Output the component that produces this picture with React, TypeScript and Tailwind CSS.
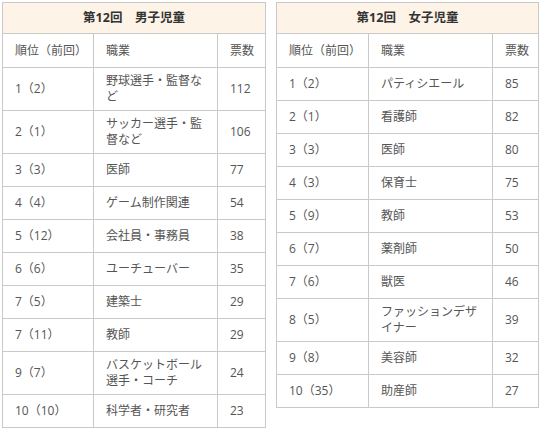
import React from 'react';

type Row = { rank: string; job: string; votes: string };

const boys: Row[] = [
  { rank: '1（2）', job: '野球選手・監督など', votes: '112' },
  { rank: '2（1）', job: 'サッカー選手・監督など', votes: '106' },
  { rank: '3（3）', job: '医師', votes: '77' },
  { rank: '4（4）', job: 'ゲーム制作関連', votes: '54' },
  { rank: '5（12）', job: '会社員・事務員', votes: '38' },
  { rank: '6（6）', job: 'ユーチューバー', votes: '35' },
  { rank: '7（5）', job: '建築士', votes: '29' },
  { rank: '7（11）', job: '教師', votes: '29' },
  { rank: '9（7）', job: 'バスケットボール選手・コーチ', votes: '24' },
  { rank: '10（10）', job: '科学者・研究者', votes: '23' },
];

const girls: Row[] = [
  { rank: '1（2）', job: 'パティシエール', votes: '85' },
  { rank: '2（1）', job: '看護師', votes: '82' },
  { rank: '3（3）', job: '医師', votes: '80' },
  { rank: '4（3）', job: '保育士', votes: '75' },
  { rank: '5（9）', job: '教師', votes: '53' },
  { rank: '6（7）', job: '薬剤師', votes: '50' },
  { rank: '7（6）', job: '獣医', votes: '46' },
  { rank: '8（5）', job: 'ファッションデザイナー', votes: '39' },
  { rank: '9（8）', job: '美容師', votes: '32' },
  { rank: '10（35）', job: '助産師', votes: '27' },
];

const cell = 'bg-white flex items-center min-h-[32px] px-[12px] py-[5px] leading-[16px]';

function RankTable({ title, rows, cols }: { title: string; rows: Row[]; cols: string }) {
  return (
    <div className={`grid ${cols} gap-px bg-[#c9c9c9] p-px`}>
      <div className="col-span-3 bg-[#fdf4e7] h-[30px] flex items-center justify-center font-bold text-[12.5px] text-[#333]">
        {title}
      </div>
      <div className={`${cell} h-[33px] whitespace-nowrap`}>順位（前回）</div>
      <div className={`${cell} h-[33px]`}>職業</div>
      <div className={`${cell} h-[33px] whitespace-nowrap`}>票数</div>
      {rows.map((r, i) => (
        <React.Fragment key={i}>
          <div className={`${cell} whitespace-nowrap`}>{r.rank}</div>
          <div className={cell}>{r.job}</div>
          <div className={`${cell} whitespace-nowrap`}>{r.votes}</div>
        </React.Fragment>
      ))}
    </div>
  );
}

export default function App() {
  return (
    <div
      className="w-[540px] h-[429px] bg-white pl-[2px] pt-[2px] flex items-start gap-[10px] text-[12px] text-[#555]"
      style={{ fontFamily: '"Open Sans", "Noto Sans CJK JP", sans-serif' }}
    >
      <div className="w-[264px]">
        <RankTable title="第12回　男子児童" rows={boys} cols="grid-cols-[90px_123px_47px]" />
      </div>
      <div className="w-[263px]">
        <RankTable title="第12回　女子児童" rows={girls} cols="grid-cols-[91px_123px_45px]" />
      </div>
    </div>
  );
}
